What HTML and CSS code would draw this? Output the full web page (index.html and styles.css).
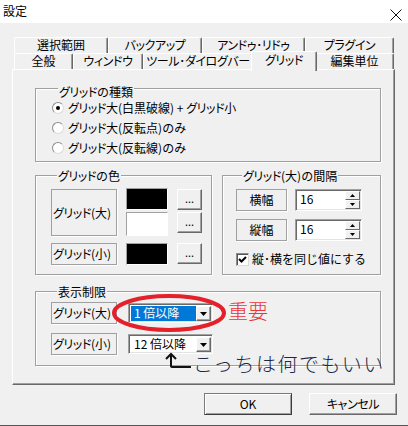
FILE: index.html
```html
<!DOCTYPE html>
<html lang="ja">

<head>
    <meta charset="UTF-8">
    <title>設定</title>
    <link rel="stylesheet" href="styles.css">
</head>

<body>
    <div class="window">
        <div class="titlebar">
            <span class="title">設定</span>
            <svg class="close" width="12" height="12" viewBox="0 0 12 12">
                <path d="M0.5 0.5 L11.5 11.5 M11.5 0.5 L0.5 11.5" stroke="#111" stroke-width="1" fill="none" />
            </svg>
        </div>

        <!-- Tabs -->
        <div class="tabs">
            <div class="tab-row">
                <div class="tab" style="width: 94px">選択範囲</div>
                <div class="tab kana" style="width: 94px">バックアップ</div>
                <div class="tab kana" style="width: 103px">アンドゥ･リドゥ</div>
                <div class="tab kana" style="width: 89px">プラグイン</div>
            </div>
            <div class="tab-row">
                <div class="tab" style="width: 59px">全般</div>
                <div class="tab kana" style="width: 70px">ウィンドウ</div>
                <div class="tab kana" style="width: 110px">ツール･ダイログバー</div>
                <div class="tab kana active">グリッド</div>
                <div class="tab" style="width: 79px">編集単位</div>
            </div>
        </div>

        <div class="page">
            <!-- Grid type -->
            <div class="group type-group">
                <div class="group-title"><span class="kana">グリッド</span>の種類</div>
                <div class="radio-list">
                    <label class="radio-item"><span class="radio checked"></span><span><span class="kana">グリッド</span>大(白黒破線) + <span class="kana">グリッド</span>小</span></label>
                    <label class="radio-item"><span class="radio"></span><span><span class="kana">グリッド</span>大(反転点)のみ</span></label>
                    <label class="radio-item"><span class="radio"></span><span><span class="kana">グリッド</span>大(反転線)のみ</span></label>
                </div>
            </div>

            <div class="group-pair">
                <!-- Grid colour -->
                <div class="group color-group">
                    <div class="group-title"><span class="kana">グリッド</span>の色</div>
                    <div class="color-row">
                        <div class="static-box big"><span class="kana">グリッド</span>(大)</div>
                        <div class="swatch-col">
                            <div class="swatch black"></div>
                            <div class="swatch white"></div>
                        </div>
                        <div class="dots-col">
                            <button class="dots">...</button>
                            <button class="dots">...</button>
                        </div>
                    </div>
                    <div class="color-row small">
                        <div class="static-box"><span class="kana">グリッド</span>(小)</div>
                        <div class="swatch black single"></div>
                        <button class="dots">...</button>
                    </div>
                </div>

                <!-- Grid interval -->
                <div class="group interval-group">
                    <div class="group-title"><span class="kana">グリッド</span>(大)の間隔</div>
                    <div class="interval-row">
                        <div class="static-box center">横幅</div>
                        <div class="spin-field">
                            <span class="spin-value">16</span>
                            <div class="spin-buttons">
                                <span class="spin-btn"><svg width="5" height="3"><path d="M2.5 0 L5 3 L0 3 Z" fill="#000" /></svg></span>
                                <span class="spin-btn"><svg width="5" height="3"><path d="M0 0 L5 0 L2.5 3 Z" fill="#000" /></svg></span>
                            </div>
                        </div>
                    </div>
                    <div class="interval-row">
                        <div class="static-box center">縦幅</div>
                        <div class="spin-field">
                            <span class="spin-value">16</span>
                            <div class="spin-buttons">
                                <span class="spin-btn"><svg width="5" height="3"><path d="M2.5 0 L5 3 L0 3 Z" fill="#000" /></svg></span>
                                <span class="spin-btn"><svg width="5" height="3"><path d="M0 0 L5 0 L2.5 3 Z" fill="#000" /></svg></span>
                            </div>
                        </div>
                    </div>
                    <label class="check-item">
                        <span class="checkbox">
                            <svg width="9" height="9" viewBox="0 0 9 9"><path d="M1 4 L3.5 6.5 L8 2" stroke="#000" stroke-width="2" fill="none" /></svg>
                        </span>
                        縦･横を同じ値にする
                    </label>
                </div>
            </div>

            <!-- Display limit -->
            <div class="group limit-group">
                <div class="group-title">表示制限</div>
                <div class="limit-row">
                    <div class="static-box"><span class="kana">グリッド</span>(大)</div>
                    <div class="combo">
                        <span class="combo-value selected">1 倍以降</span>
                        <span class="combo-btn"><svg width="7" height="4"><path d="M0 0 L7 0 L3.5 4 Z" fill="#000" /></svg></span>
                    </div>
                    <svg class="mark-ellipse" width="116" height="40" viewBox="0 0 116 40">
                        <ellipse cx="58" cy="20" rx="55" ry="17" stroke="#e4202a" stroke-width="4" fill="none" />
                    </svg>
                    <span class="note-important">重要</span>
                </div>
                <div class="limit-row">
                    <div class="static-box"><span class="kana">グリッド</span>(小)</div>
                    <div class="combo">
                        <span class="combo-value">12 倍以降</span>
                        <span class="combo-btn"><svg width="7" height="4"><path d="M0 0 L7 0 L3.5 4 Z" fill="#000" /></svg></span>
                    </div>
                    <svg class="note-arrow" width="30" height="18" viewBox="0 0 30 18">
                        <path d="M8 2 L8 14 Q8 15 10 15 L28 15" stroke="#111" stroke-width="2" fill="none" />
                        <path d="M3 7 L8 2 L13 7" stroke="#111" stroke-width="2" fill="none" />
                    </svg>
                    <span class="note-any">こっちは何でもいい</span>
                </div>
            </div>
        </div>

        <div class="footer">
            <button class="dlg-button default">OK</button>
            <button class="dlg-button kana">キャンセル</button>
        </div>
    </div>
</body>

</html>
```

FILE: styles.css
```css
:root {
    --face: #f0f0f0;
    --light: #ffffff;
    --shadow: #a0a0a0;
    --dark-shadow: #696969;
    --text: #000;
}

* {
    box-sizing: border-box;
}

body {
    margin: 0;
    background: var(--face);
    font-family: "Noto Sans CJK JP", sans-serif;
    font-size: 12px;
    color: var(--text);
}

/* narrow katakana, close to the half-width forms of the original UI font */
.kana {
    font-feature-settings: "palt";
    letter-spacing: -0.4px;
}

.window {
    width: 408px;
    height: 426px;
    background: var(--face);
    border-bottom: 1px solid #555;
}

.titlebar {
    height: 23px;
    background: #fff;
    display: flex;
    justify-content: space-between;
    align-items: flex-start;
    padding: 4px 6px 0 3px;
    line-height: 14px;
}

.close {
    margin-top: 5px;
}

/* Tabs */
.tabs {
    margin: 14px 0 0 14px;
    width: 380px;
}

.tab-row {
    display: flex;
    height: 16px;
    align-items: flex-start;
}

.tab {
    flex: none;
    height: 16px;
    line-height: 14px;
    text-align: center;
    white-space: nowrap;
    border-top: 1px solid var(--light);
    border-left: 1px solid var(--light);
    border-right: 1px solid var(--dark-shadow);
    box-shadow: inset -1px 0 0 var(--shadow);
    border-top-left-radius: 2px;
    border-top-right-radius: 2px;
    background: var(--face);
}

.tab.active {
    position: relative;
    z-index: 1;
    width: 66px;
    height: 20px;
    margin: -2px -2px 0;
    line-height: 15px;
}

/* Page */
.page {
    margin-left: 12px;
    width: 383px;
    height: 316px;
    border: 1px solid;
    border-color: var(--light) var(--dark-shadow) var(--dark-shadow) var(--light);
    box-shadow: inset -1px -1px 0 var(--shadow);
    padding: 18px 13px 0 22px;
}

.group {
    border: 1px solid var(--shadow);
    box-shadow: 1px 1px 0 var(--light), inset 1px 1px 0 var(--light);
}

.group-title {
    width: fit-content;
    margin: -7px 0 0 6px;
    padding: 0 1px;
    background: var(--face);
    line-height: 13px;
}

.static-box {
    width: 66px;
    height: 22px;
    border: 1px solid var(--shadow);
    box-shadow: 1px 1px 0 var(--light);
    display: flex;
    align-items: center;
    padding-left: 1px;
    line-height: 14px;
}

.static-box.big {
    height: 47px;
    margin-top: 1px;
}

.static-box.center {
    width: 51px;
    justify-content: center;
    padding-left: 0;
}

/* Grid type */
.type-group {
    padding: 3px 0 3px 16px;
}

.radio-item {
    display: flex;
    align-items: center;
    height: 20px;
    gap: 4px;
    line-height: 14px;
}

.radio {
    width: 12px;
    height: 12px;
    border-radius: 50%;
    border: 1px solid #8c8c8c;
    border-right-color: #dcdcdc;
    border-bottom-color: #dcdcdc;
    background: #fff;
    display: flex;
    align-items: center;
    justify-content: center;
}

.radio.checked::after {
    content: "";
    width: 4px;
    height: 4px;
    border-radius: 50%;
    background: #000;
}

.group-pair {
    display: flex;
    gap: 10px;
    margin-top: 13px;
}

/* Grid colour */
.color-group {
    width: 177px;
    padding: 0 0 9px 15px;
}

.color-row {
    display: flex;
    align-items: flex-start;
    gap: 9px;
    margin-top: 6px;
}

.color-row.small {
    margin-top: 7px;
}

.swatch-col,
.dots-col {
    display: flex;
    flex-direction: column;
    gap: 2px;
}

.dots-col {
    margin-top: 1px;
}

.swatch {
    width: 42px;
    height: 22px;
    border: 1px solid;
    border-color: var(--shadow) var(--light) var(--light) var(--shadow);
}

.swatch.black {
    background: #000;
}

.swatch.white {
    background: #fff;
    height: 24px;
}

.dots {
    width: 25px;
    height: 21px;
    padding: 0 0 4px;
    font: inherit;
    font-size: 11px;
    line-height: 10px;
    background: var(--face);
    border: 1px solid;
    border-color: var(--light) var(--dark-shadow) var(--dark-shadow) var(--light);
    box-shadow: inset -1px -1px 0 var(--shadow);
}

/* Interval */
.interval-group {
    flex: 1;
    padding: 0 0 0 13px;
}

.interval-row {
    display: flex;
    gap: 8px;
    margin-top: 7px;
}

.interval-row + .interval-row {
    margin-top: 8px;
}

.spin-field {
    width: 67px;
    height: 22px;
    display: flex;
    background: #fff;
    border: 1px solid;
    border-color: var(--shadow) var(--light) var(--light) var(--shadow);
    box-shadow: inset 1px 1px 0 var(--dark-shadow), inset -1px -1px 0 #e3e3e3;
    padding: 2px 1px 1px 4px;
}

.spin-value {
    flex: 1;
    line-height: 13px;
}

.spin-buttons {
    display: flex;
    flex-direction: column;
    width: 15px;
    margin-top: -1px;
}

.spin-btn {
    height: 9px;
    display: flex;
    align-items: center;
    justify-content: center;
    background: var(--face);
    border: 1px solid;
    border-color: var(--light) var(--dark-shadow) var(--dark-shadow) var(--light);
}

.check-item {
    display: flex;
    align-items: center;
    gap: 3px;
    margin-top: 11px;
    line-height: 14px;
}

.checkbox {
    width: 13px;
    height: 13px;
    background: #fff;
    border: 1px solid;
    border-color: #8c8c8c #dcdcdc #dcdcdc #8c8c8c;
    box-shadow: inset 1px 1px 0 #555;
    display: flex;
    align-items: center;
    justify-content: center;
}

/* Display limit */
.limit-group {
    margin-top: 16px;
    padding: 0 0 10px 15px;
}

.limit-row {
    position: relative;
    display: flex;
    align-items: flex-start;
    gap: 11px;
    margin-top: 4px;
}

.limit-row + .limit-row {
    margin-top: 9px;
}

.combo {
    width: 85px;
    height: 20px;
    margin-top: 1px;
    display: flex;
    background: #fff;
    border: 1px solid;
    border-color: var(--shadow) var(--light) var(--light) var(--shadow);
    box-shadow: inset 1px 1px 0 var(--dark-shadow), inset -1px -1px 0 #e3e3e3;
    padding: 2px 1px 1px 2px;
}

.combo-value {
    flex: 1;
    padding-left: 3px;
    line-height: 14px;
}

.combo-value.selected {
    background: #0078d7;
    color: #fff;
}

.combo-btn {
    width: 15px;
    display: flex;
    align-items: center;
    justify-content: center;
    background: var(--face);
    border: 1px solid;
    border-color: var(--light) var(--dark-shadow) var(--dark-shadow) var(--light);
    box-shadow: inset -1px -1px 0 var(--shadow);
}

.mark-ellipse {
    position: absolute;
    left: 60px;
    top: -9px;
}

.note-important {
    position: absolute;
    left: 177px;
    top: -4px;
    font-size: 20px;
    line-height: 26px;
    color: #e8363a;
    font-weight: 300;
}

.note-arrow {
    position: absolute;
    left: 112px;
    top: 19px;
}

.note-any {
    position: absolute;
    left: 142px;
    top: 19px;
    font-size: 20px;
    line-height: 24px;
    letter-spacing: 1.5px;
    color: #1b2848;
    font-weight: 300;
    white-space: nowrap;
}

/* Footer */
.footer {
    display: flex;
    justify-content: flex-end;
    gap: 17px;
    padding-right: 11px;
    margin-top: 8px;
}

.dlg-button {
    width: 88px;
    height: 22px;
    font: inherit;
    line-height: 14px;
    background: var(--face);
    border: 1px solid;
    border-color: var(--light) var(--dark-shadow) var(--dark-shadow) var(--light);
    box-shadow: inset -1px -1px 0 var(--shadow);
}

.dlg-button.default {
    border-color: #7a7a7a #3c3c3c #3c3c3c #7a7a7a;
    box-shadow: inset 1px 1px 0 var(--light), inset -1px -1px 0 var(--shadow);
}

.dlg-button.kana {
    font-feature-settings: "palt";
    letter-spacing: -0.4px;
}
```
